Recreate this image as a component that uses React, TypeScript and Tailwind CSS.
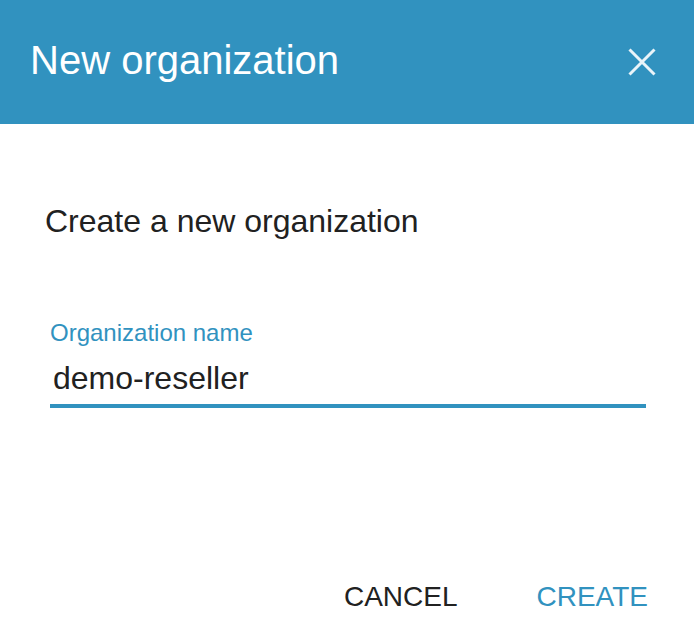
export default function App() {
  return (
    <div className="flex h-screen w-full flex-col bg-white font-['Liberation_Sans',Arial,sans-serif] text-[#212121]">
      {/* Header */}
      <div className="flex h-[124px] shrink-0 items-center justify-between bg-[#3192bf] pl-[30px] pr-[38px]">
        <h1 className="pb-[5px] text-[40px] leading-[40px] font-normal text-white">New organization</h1>
        <button className="flex h-[28px] w-[28px] items-center justify-center" aria-label="Close">
          <svg width="28" height="28" viewBox="0 0 28 28" fill="none" stroke="#eaf4f9" strokeWidth="3" strokeLinecap="butt">
            <path d="M1.5 1.5 L26.5 26.5 M26.5 1.5 L1.5 26.5" />
          </svg>
        </button>
      </div>

      {/* Body */}
      <div className="px-[45px] pt-[81px]">
        <p className="text-[32px] leading-[32px]">Create a new organization</p>
      </div>

      <div className="mt-[84px] pl-[50px] pr-[48px]">
        <label className="block text-[24px] leading-[24px] text-[#3192bf]">Organization name</label>
        <div className="mt-[17px] border-b-4 border-[#3192bf] pb-[10px] pl-[3px] text-[32px] leading-[32px]">
          demo-reseller
        </div>
      </div>

      {/* Footer */}
      <div className="mt-auto flex justify-end gap-[79px] pb-[33px] pr-[46px]">
        <button className="text-[28px] leading-[28px] text-[#212121]">CANCEL</button>
        <button className="text-[28px] leading-[28px] text-[#3192bf]">CREATE</button>
      </div>
    </div>
  );
}
